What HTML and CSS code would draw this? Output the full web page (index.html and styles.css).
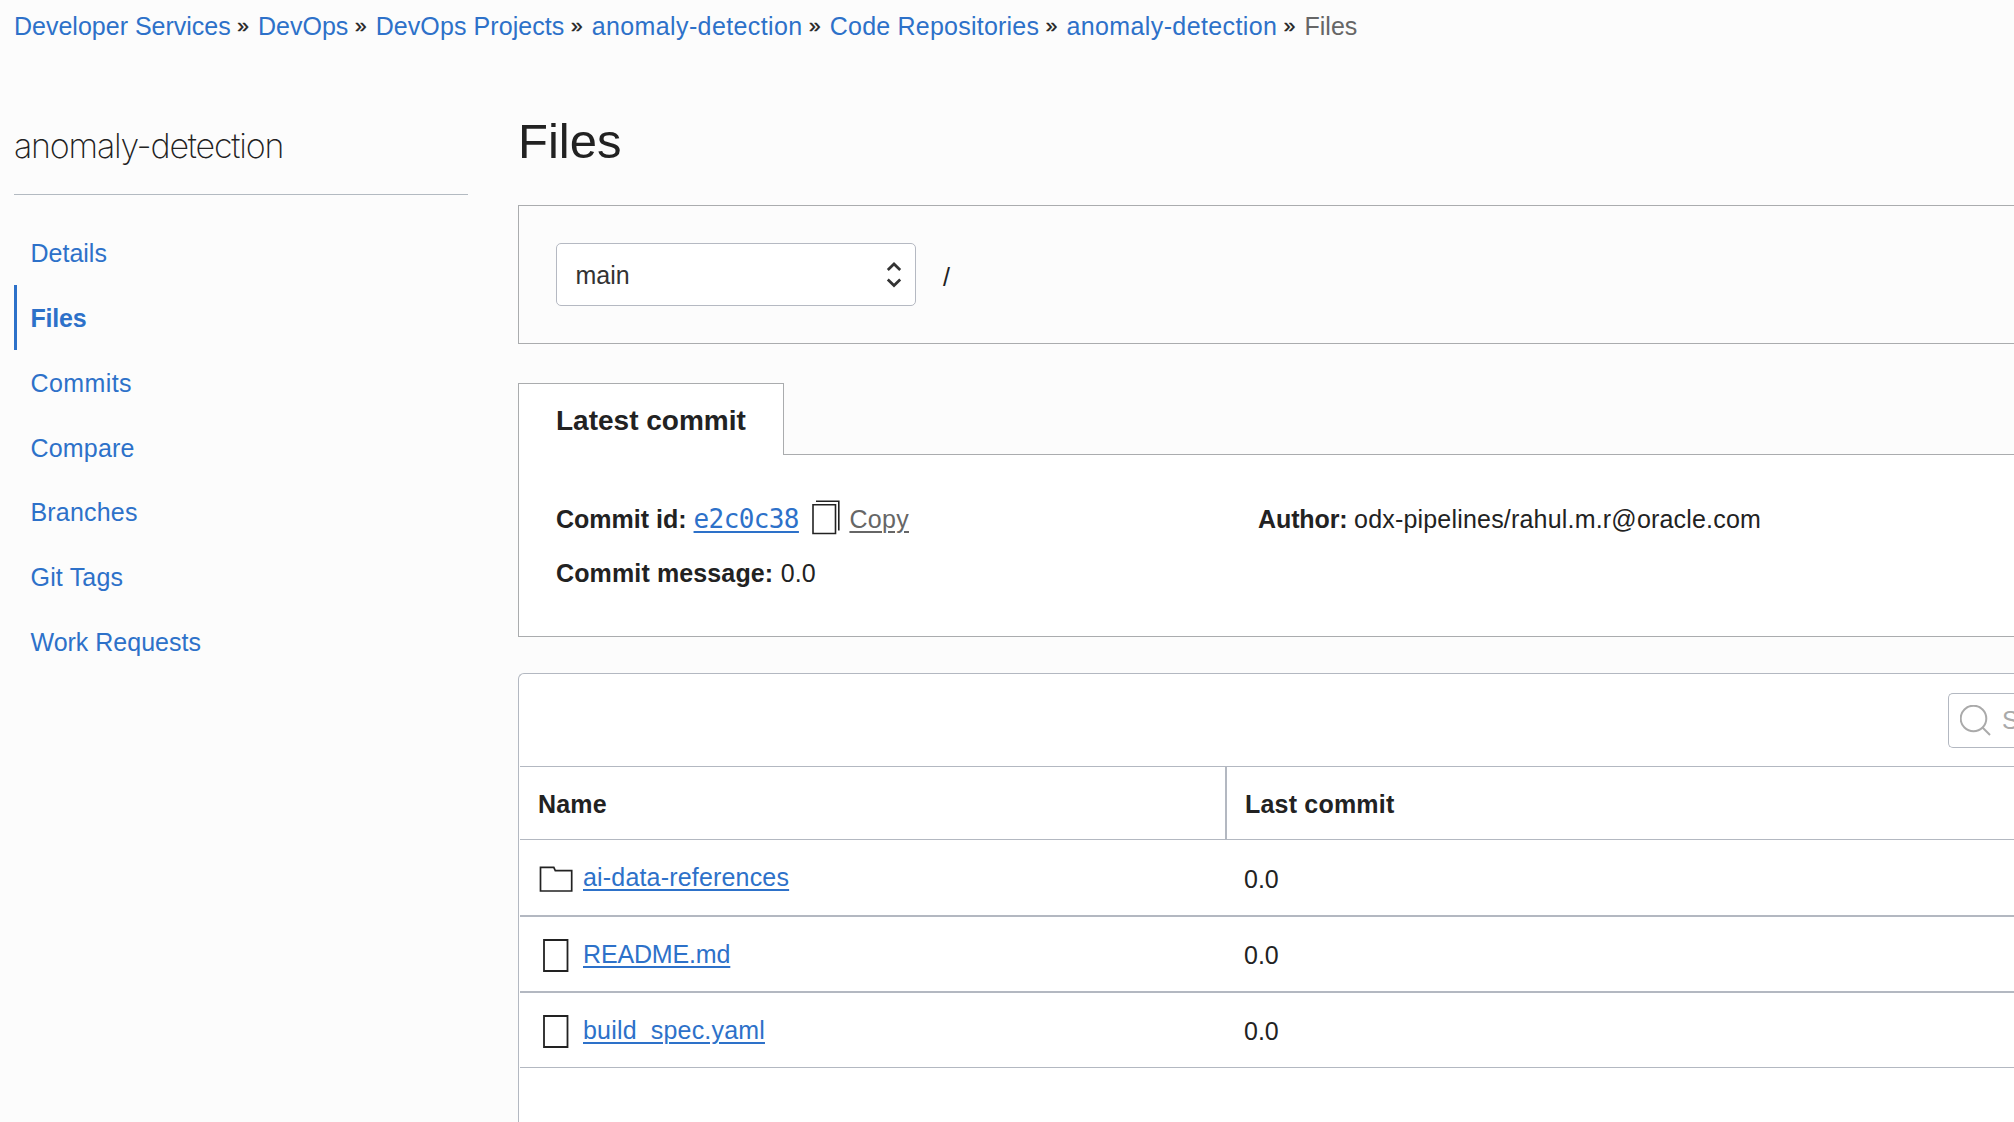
FILE: index.html
```html
<!DOCTYPE html>
<html lang="en">
<head>
<meta charset="utf-8">
<title>Files</title>
<link rel="stylesheet" href="styles.css">
</head>
<body>
<nav class="crumbs">
  <a>Developer Services</a><i>»</i><a>DevOps</a><i>»</i><a class="projects">DevOps Projects</a><i>»</i><a class="anomaly">anomaly-detection</a><i>»</i><a class="repos">Code Repositories</a><i>»</i><a class="anomaly">anomaly-detection</a><i>»</i><span>Files</span>
</nav>
<div class="layout">
  <aside class="side">
    <h2>anomaly-detection</h2>
    <ul class="menu">
      <li>Details</li>
      <li class="active">Files</li>
      <li class="wide">Commits</li>
      <li class="loose">Compare</li>
      <li class="loose">Branches</li>
      <li class="loose">Git Tags</li>
      <li>Work Requests</li>
    </ul>
  </aside>
  <main class="main">
    <h1>Files</h1>
    <section class="path">
      <div class="select"><span>main</span>
        <svg width="16" height="30" viewBox="0 0 16 30"><path d="M1.800 11 8 5l6.200 6M1.800 20.500 8 26.500l6.200-6" fill="none" stroke="#333" stroke-width="2.700"/></svg>
      </div>
      <span class="slash">/</span>
    </section>
    <div class="tabs"><div class="tab">Latest commit</div><div class="rest"></div></div>
    <section class="commit">
      <div class="col">
        <p><b>Commit id:</b><a class="hash">e2c0c38</a>
          <svg class="copyicon" width="28" height="36" viewBox="0 0 28 36"><path d="M1 4.800h22.500v28.700H1z M4 1.300h22.800v29.200" fill="none" stroke="#222" stroke-width="1.600"/></svg><a class="copy">Copy</a></p>
        <p><b class="message">Commit message:</b><span>0.0</span></p>
      </div>
      <div class="col">
        <p><b class="author">Author:</b><span class="mail">odx-pipelines/rahul.m.r@oracle.com</span></p>
      </div>
    </section>
    <section class="card">
      <div class="tools">
        <div class="search"><svg width="32" height="32" viewBox="0 0 32 32"><g fill="none" stroke="#aaa" stroke-width="2"><circle cx="13.500" cy="13.500" r="12.800"/><path d="M22.500 22.500l7.500 7.500"/></g></svg><span>Search</span></div>
      </div>
      <div class="row head"><div class="cell">Name</div><div class="cell second">Last commit</div></div>
      <div class="row first">
        <div class="cell"><svg width="34" height="34" viewBox="0 0 34 34"><path d="M1.500 5.400h13.300l1.500 3.300h16.400v20.300H1.500z" fill="none" stroke="#222" stroke-width="1.700"/></svg><a class="loose">ai-data-references</a></div><div class="cell num">0.0</div>
      </div>
      <div class="row">
        <div class="cell"><svg width="34" height="34" viewBox="0 0 34 34"><path d="M5 1h23.500v31H5z" fill="none" stroke="#222" stroke-width="1.800"/></svg><a class="tight">README.md</a></div><div class="cell num">0.0</div>
      </div>
      <div class="row last">
        <div class="cell"><svg width="34" height="34" viewBox="0 0 34 34"><path d="M5 1h23.500v31H5z" fill="none" stroke="#222" stroke-width="1.800"/></svg><a class="loose">build_spec.yaml</a></div><div class="cell num">0.0</div>
      </div>
    </section>
  </main>
</div>
</body>
</html>
```
FILE: styles.css
```css
* { box-sizing: border-box; }
html, body { height: 100%; }
body {
  margin: 0;
  overflow: hidden;
  background: #fcfcfc;
  color: #222;
  font: 25px/30px "Liberation Sans", Arial, sans-serif;
}
h1, h2, p, ul { margin: 0; padding: 0; list-style: none; font-weight: normal; }
svg { display: block; flex: none; }
a { color: #2d71c9; }

.crumbs { display: flex; height: 50px; padding: 11px 0 0 14px; white-space: nowrap; }
.crumbs i {
  width: 27.300px;
  padding-left: 6.500px;
  font-style: normal;
  font-size: 21px;
  line-height: 27px;
  -webkit-text-stroke: 0.400px #222;
}
.crumbs span { color: #666; }
.projects { letter-spacing: 0.080px; }
.anomaly { letter-spacing: 0.380px; }
.repos { letter-spacing: 0.220px; }
.wide { letter-spacing: 0.400px; }
.loose { letter-spacing: 0.180px; }
.tight { letter-spacing: -0.150px; }

.layout { display: flex; height: 1072px; }
.side { width: 454px; margin-left: 14px; flex: none; }
.side h2 {
  height: 145px;
  padding-top: 76px;
  border-bottom: 1px solid #b3bac1;
  font: 200 34px/40px Inter, sans-serif;
  letter-spacing: -1.200px;
}
.menu { padding-top: 25.200px; }
.menu li { height: 64.800px; padding: 18px 0 0 16.500px; color: #2d71c9; }
.menu .active { padding-left: 13.500px; border-left: 3px solid #2d71c9; font-weight: bold; letter-spacing: -0.200px; }

.main { width: 1496px; margin-left: 50px; flex: none; overflow: hidden; }
.main h1 { height: 155px; padding-top: 61px; font-size: 49px; line-height: 60px; }
.path {
  display: flex;
  height: 139px;
  padding: 37px 0 0 37px;
  border: 1px solid #aaacae;
  border-right: 0;
}
.select {
  display: flex;
  justify-content: space-between;
  width: 360px;
  height: 63px;
  padding: 16px 13px 0 18.500px;
  border: 1px solid #b5b9c2;
  border-radius: 5px;
  background: #fff;
  color: #333;
}
.select svg { margin-top: -1px; }
.slash { padding: 19px 0 0 27px; }
.tabs { display: flex; height: 72px; margin-top: 39px; }
.tab {
  width: 266px;
  padding: 22px 0 0 37px;
  border: 1px solid #aaacae;
  border-bottom: 0;
  background: #fff;
  font-size: 28px;
  font-weight: bold;
}
.rest { flex: 1; border-bottom: 1px solid #aaacae; }
.commit {
  display: flex;
  height: 182px;
  padding: 45px 0 0 37px;
  border: 1px solid #aaacae;
  border-width: 0 0 1px 1px;
  background: #fff;
}
.col { width: 702px; flex: none; }
.col p { display: flex; height: 54px; padding-top: 4px; white-space: nowrap; }
.hash {
  margin-left: 7px;
  font-family: "DejaVu Sans Mono", monospace;
  font-size: 26px;
  letter-spacing: -0.600px;
}
.hash, .copy, .cell a { text-decoration: underline; text-decoration-thickness: 2px; text-underline-offset: 3px; }
.copyicon { margin: -4px 9.500px 0 13px; }
.copy { color: #666; letter-spacing: 0.300px; }
.message { letter-spacing: 0.130px; }
.message + span { margin-left: 7.500px; }
.author { letter-spacing: -0.100px; }
.mail { margin-left: 6.500px; letter-spacing: 0.190px; }

.card {
  height: 470px;
  margin-top: 36px;
  border: 1px solid #b3b8c1;
  border-width: 1px 0 0 1px;
  border-radius: 6px 0 0 0;
  background: #fff;
}
.tools { display: flex; justify-content: flex-end; height: 92px; padding-top: 19px; }
.search {
  display: flex;
  width: 66px;
  height: 55px;
  padding: 11px 0 0 11px;
  overflow: hidden;
  border: 1px solid #b3b8c1;
  border-right: 0;
  border-radius: 5px 0 0 5px;
  color: #aaa;
}
.search span { margin-left: 10px; }
.row { display: flex; height: 76px; margin-left: 1px; border-bottom: 2px solid #b3b8c1; }
.head { height: 74px; border-top: 1px solid #b3b8c1; border-bottom-width: 1px; font-weight: bold; letter-spacing: 0.200px; }
.first { height: 77px; }
.last { height: 75px; border-bottom-width: 1px; }
.cell { display: flex; width: 705px; padding: 22px 0 0 19px; }
.head .cell { padding-left: 18px; }
.cell svg { margin-right: 10px; }
.head .second { width: 789px; border-left: 2px solid #b3b8c1; }
.num { padding-top: 23px; }
.first .num { padding-top: 24px; }
```
